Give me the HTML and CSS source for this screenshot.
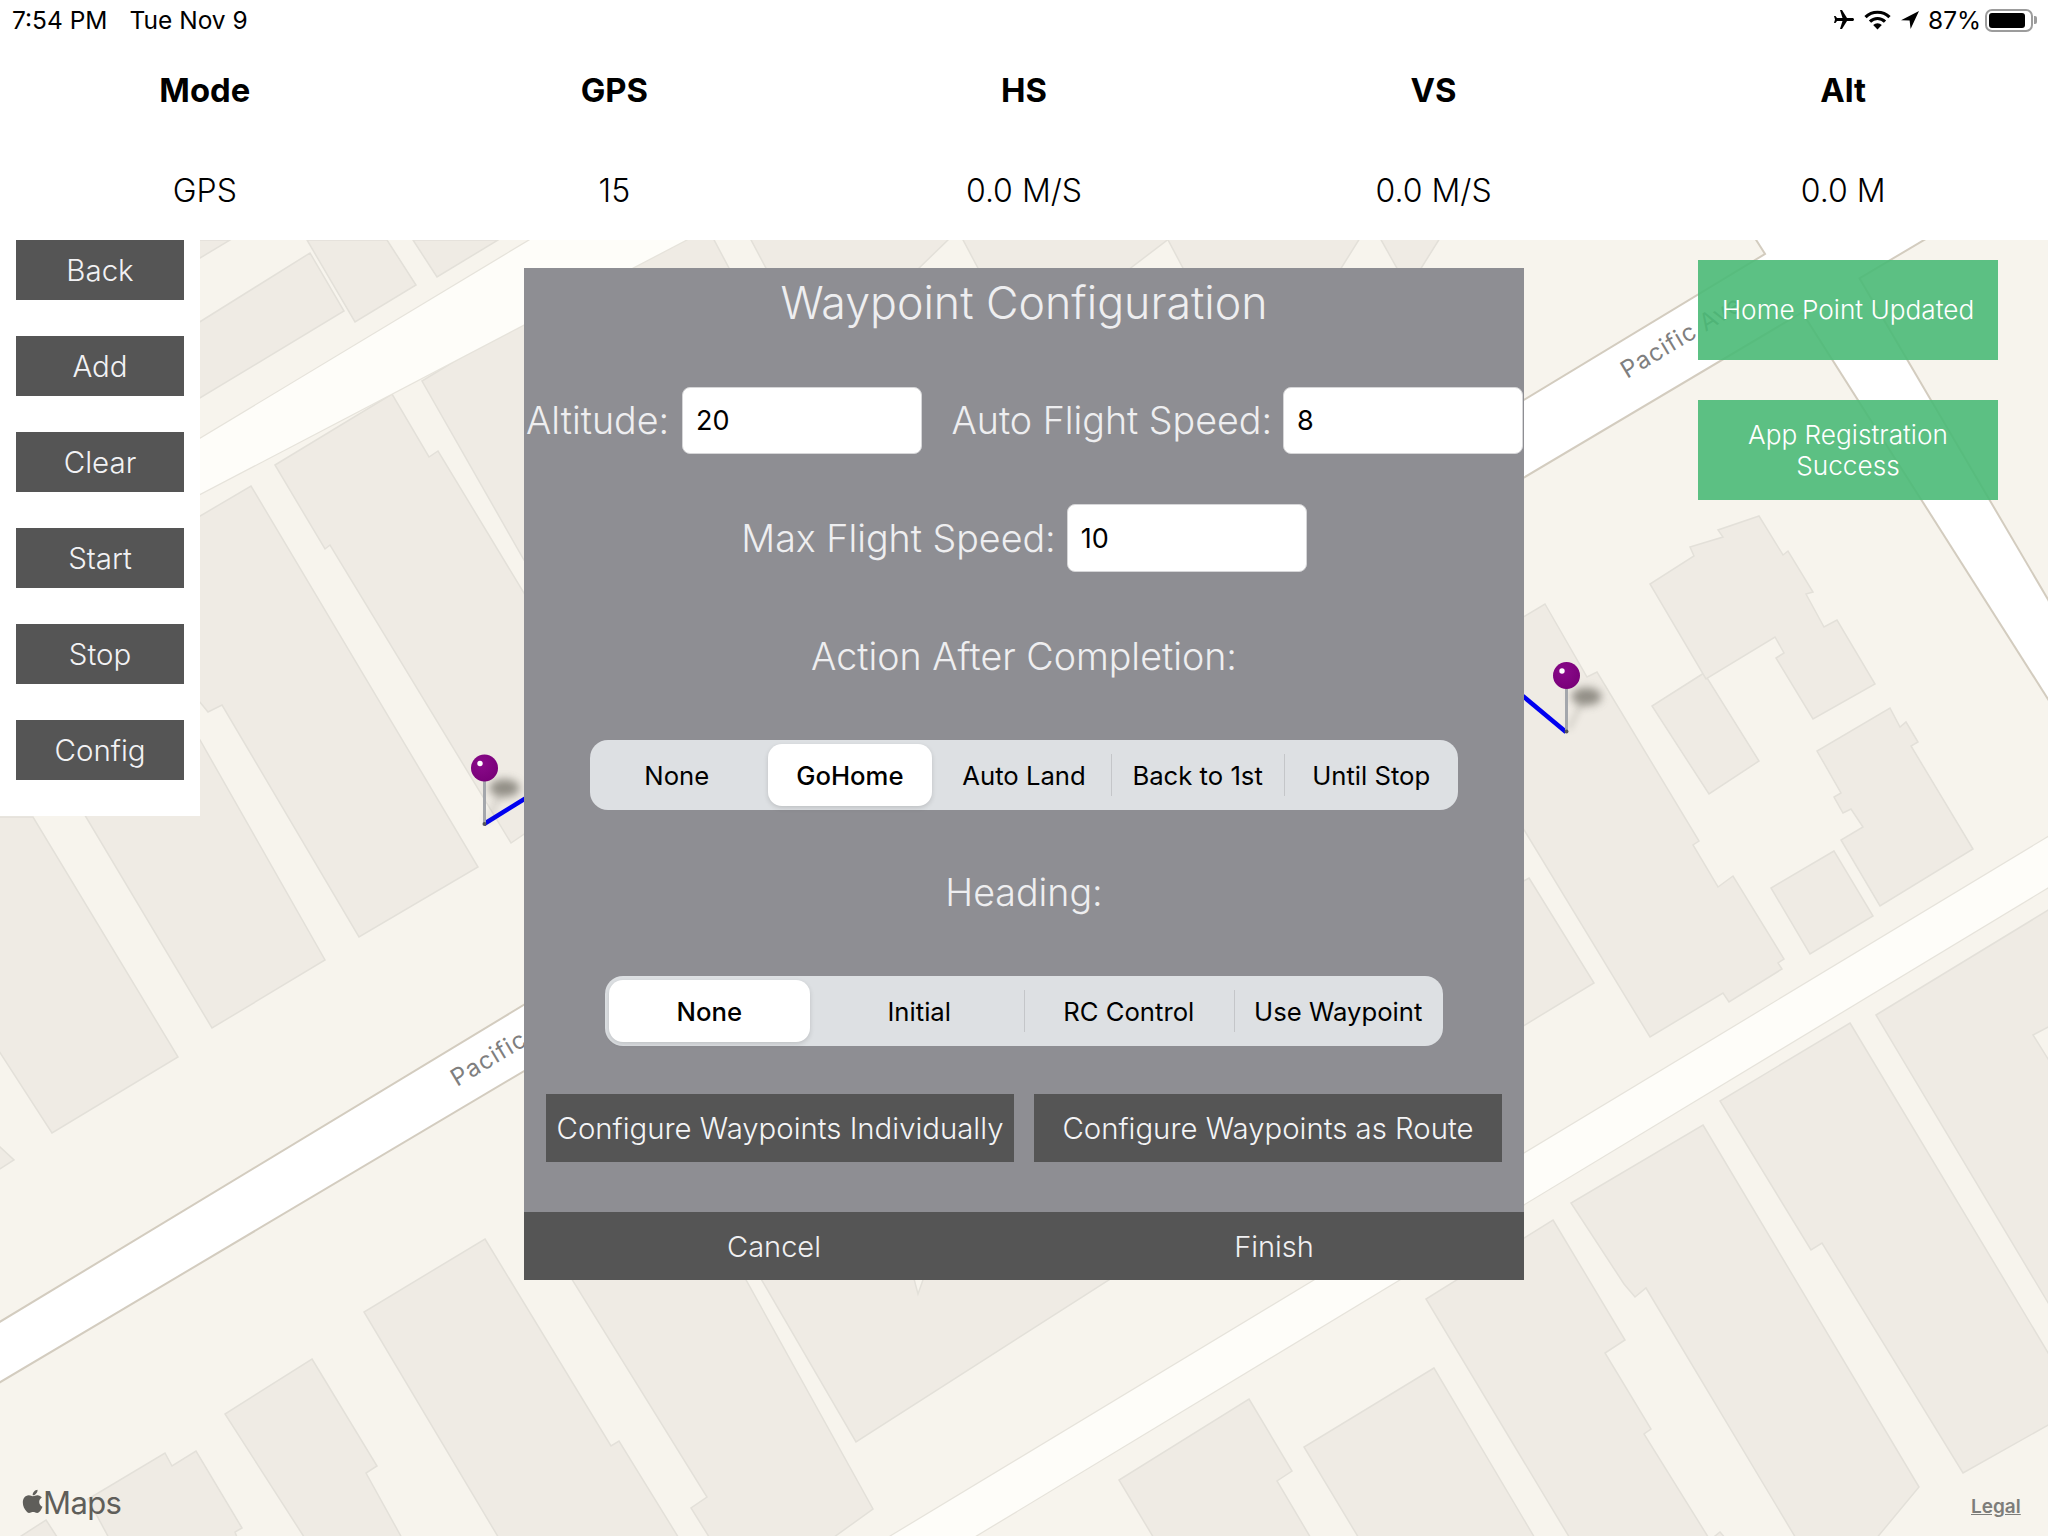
FILE: index.html
```html
<!DOCTYPE html>
<html lang="en">
<head>
<meta charset="utf-8">
<title>Waypoint Configuration</title>
<link rel="stylesheet" href="styles.css">
</head>
<body>
<div class="app">
  <header class="status">
    <div class="status-left"><span>7:54 PM</span><span>Tue Nov 9</span></div>
    <div class="status-right">
      <svg class="ic-plane" viewBox="0 0 24 24"><path transform="rotate(90 12 12)" d="M21 16v-2l-8-5V3.5c0-.83-.67-1.5-1.5-1.5S10 2.67 10 3.5V9l-8 5v2l8-2.5V19l-2 1.5V22l3.5-1 3.5 1v-1.5L13 19v-5.5l8 2.5z"/></svg>
      <svg class="ic-wifi" viewBox="0 0 27 20"><path class="wifi-arc" d="M1.5 7.2a17 17 0 0 1 24 0"/><path class="wifi-arc" d="M6 11.6a10.6 10.6 0 0 1 15 0"/><path d="M13.5 19.5l-4.3-4.4a6 6 0 0 1 8.6 0z"/></svg>
      <svg class="ic-loc" viewBox="0 0 18 18"><path d="M0 9.2 18 0 9.6 18 8.6 9.6z"/></svg>
      <span class="pct">87%</span>
      <div class="battery"><div class="battery-fill"></div></div>
      <div class="battery-nub"></div>
    </div>
  </header>

  <section class="telemetry">
    <div class="t-head">Mode</div><div class="t-head">GPS</div><div class="t-head">HS</div><div class="t-head">VS</div><div class="t-head">Alt</div>
    <div class="t-val">GPS</div><div class="t-val">15</div><div class="t-val">0.0 M/S</div><div class="t-val">0.0 M/S</div><div class="t-val">0.0 M</div>
  </section>

  <main class="map">
    <svg class="map-art" viewBox="0 240 2048 1296" width="2048" height="1296">
      <defs>
        <filter id="blur" x="-80%" y="-80%" width="260%" height="260%"><feGaussianBlur stdDeviation="4"/></filter>
        <filter id="blur-soft" x="-100%" y="-50%" width="300%" height="200%"><feGaussianBlur stdDeviation="3"/></filter>
        <radialGradient id="head" cx="0.4" cy="0.35" r="0.7"><stop offset="0" stop-color="#8a0a8a"/><stop offset="1" stop-color="#780078"/></radialGradient>
      </defs>
      <g class="bld">
        <polygon points="190,264 230,240 190,240"/>
        <polygon points="190,328 310,253 344,311 190,404"/>
        <polygon points="307,240 387,240 416,285 355,322"/>
        <polygon points="413,240 498,240 437,277"/>
        <polygon points="422,381 660,236 712,236 730,270 730,560 524,560"/>
        <polygon points="750,238 950,238 917,270 767,270"/>
        <polygon points="962,238 1170,238 1128,270 979,270"/>
        <polygon points="1167,238 1360,238 1340,270 1184,270"/>
        <polygon points="1380,238 1440,238 1420,270 1398,270"/>
        <polygon points="275,465 392,394 429,457 438,451 530,603 530,830 511,843 330,545 325,549"/>
        <polygon points="190,522 251,486 478,867 359,937 222,705 208,712 190,690"/>
        <polygon points="80,807 200,740 325,960 212,1028"/>
        <polygon points="-5,817 33,817 178,1057 52,1133 -5,1045"/>
        <polygon points="-5,1150 0,1147 14,1160 -5,1172"/>
        <polygon points="485,1239 611,1446 619,1441 680,1540 500,1540 364,1312"/>
        <polygon points="312,1359 377,1466 366,1473 403,1540 306,1540 225,1414"/>
        <polygon points="165,1453 172,1466 196,1451 242,1528 235,1532 238,1540 110,1540 88,1499"/>
        <polygon points="46,1520 59,1540 15,1540"/>
        <polygon points="560,1260 735,1260 873,1509 830,1540 711,1540 691,1508 707,1497"/>
        <polygon points="750,1260 909,1260 918,1294 930,1260 1140,1260 856,1442"/>
        <polygon points="1553,1220 1625,1340 1605,1353 1651,1429 1644,1434 1710,1540 1571,1540 1426,1299"/>
        <polygon points="1703,1125 1919,1487 1875,1540 1797,1540 1646,1288 1635,1297 1624,1284 1571,1203"/>
        <polygon points="1850,1023 2050,1356 2050,1424 1963,1473 1822,1243 1811,1250 1720,1101"/>
        <polygon points="1876,1015 2050,909 2050,1306"/>
        <polygon points="1434,1368 1304,1447 1360,1540 1536,1540"/>
        <polygon points="1249,1399 1292,1471 1277,1481 1312,1540 1155,1540 1119,1480"/>
        <polygon points="1720,1532 1727,1540 1710,1540"/>
        <polygon points="1545,604 1587,677 1597,672 1699,841 1693,845 1718,887 1733,876 1784,959 1778,963 1782,969 1729,1002 1723,993 1650,1037 1515,815 1515,622"/>
        <polygon points="1529,878 1594,983 1515,1031 1515,886"/>
        <polygon points="1704,673 1652,706 1709,794 1759,761"/>
        <polygon points="1759,516 1718,530 1723,537 1690,547 1694,556 1650,584 1706,679 1775,637 1784,653 1776,658 1813,719 1875,684 1837,620 1824,627 1806,594 1813,592 1788,551 1783,555"/>
        <polygon points="1890,708 1900,727 1906,722 1918,742 1911,746 1973,849 1880,906 1841,840 1863,827 1851,809 1843,813 1834,797 1841,793 1817,751"/>
        <polygon points="1834,851 1771,888 1810,954 1873,916"/>
      </g>
      <polygon class="notch" points="2033,1035 2050,1026 2050,1062"/>
      <path class="minor-edge" d="M150,469 L560,222 L720,222 L150,520Z"/>
      <path class="minor-edge" d="M888,1538 L2050,836 L2050,886 L972,1538Z"/>
      <path class="minor-fill" d="M150,469 L560,222 L720,222 L150,520Z"/>
      <path class="minor-fill" d="M888,1538 L2050,836 L2050,886 L972,1538Z"/>
      <path class="major-edge" d="M-10,1329 L2000,113 L2040,170 L-10,1387Z"/>
      <path class="major-edge" d="M1737,208 L1817,208 L2100,690 L2100,779Z"/>
      <path class="major-fill" d="M-10,1329 L2000,113 L2040,170 L-10,1387Z"/>
      <path class="major-fill" d="M1737,208 L1817,208 L2100,690 L2100,779Z"/>
      <text class="road-label" transform="translate(1627,379) rotate(-31)">Pacific Ave</text>
      <text class="road-label" transform="translate(457,1087) rotate(-31)">Pacific Ave</text>
      <line class="route" x1="484" y1="824" x2="620" y2="740"/>
      <line class="route" x1="1566" y1="732" x2="1500" y2="677"/>
      <g transform="translate(484.5 768)">
        <line class="pin-trail" x1="2" y1="54" x2="16" y2="26" filter="url(#blur-soft)"/>
        <ellipse class="pin-shadow" cx="20" cy="20" rx="15" ry="9" filter="url(#blur)"/>
        <rect class="pin-stick" x="-1.5" y="12" width="3" height="44"/>
        <circle class="pin-tip" cx="0" cy="56" r="2"/>
        <circle cx="0" cy="0" r="13.5" fill="url(#head)"/>
        <circle class="pin-glint" cx="-4.5" cy="-4.5" r="2.7"/>
      </g>
      <g transform="translate(1566.5 675.5)">
        <line class="pin-trail" x1="2" y1="54" x2="16" y2="26" filter="url(#blur-soft)"/>
        <ellipse class="pin-shadow" cx="20" cy="21" rx="15" ry="9" filter="url(#blur)"/>
        <rect class="pin-stick" x="-1.5" y="12" width="3" height="44"/>
        <circle class="pin-tip" cx="0" cy="56" r="2"/>
        <circle cx="0" cy="0" r="13.5" fill="url(#head)"/>
        <circle class="pin-glint" cx="-4.5" cy="-4.5" r="2.7"/>
      </g>
    </svg>

    <aside class="sidebar">
      <div class="side-btn">Back</div>
      <div class="side-btn">Add</div>
      <div class="side-btn">Clear</div>
      <div class="side-btn">Start</div>
      <div class="side-btn">Stop</div>
      <div class="side-btn">Config</div>
    </aside>

    <div class="toasts">
      <div class="toast">Home Point Updated</div>
      <div class="toast">App Registration<br>Success</div>
    </div>

    <div class="attrib-left">
      <svg class="apple" viewBox="3 3 17 18.2"><path d="M17.05 20.28c-.98.95-2.05.8-3.08.35-1.09-.46-2.09-.48-3.24 0-1.44.62-2.2.44-3.06-.35C2.79 15.25 3.51 7.59 9.05 7.31c1.35.07 2.29.74 3.08.8 1.18-.24 2.31-.93 3.57-.84 1.51.12 2.65.72 3.4 1.8-3.12 1.87-2.38 5.98.48 7.13-.57 1.5-1.31 2.99-2.54 4.09zM12.03 7.25c-.15-2.23 1.66-4.07 3.74-4.25.29 2.58-2.34 4.5-3.74 4.25z"/></svg>
      <span>Maps</span>
    </div>
    <div class="legal">Legal</div>

    <section class="modal">
      <h1 class="modal-title">Waypoint Configuration</h1>
      <div class="row row-split">
        <div class="field field-wide"><span class="label">Altitude:</span><div class="input">20</div></div>
        <div class="field"><span class="label">Auto Flight Speed:</span><div class="input">8</div></div>
      </div>
      <div class="row row-center">
        <div class="field"><span class="label">Max Flight Speed:</span><div class="input">10</div></div>
      </div>
      <div class="row row-center"><span class="label">Action After Completion:</span></div>
      <div class="seg seg-five">
        <div class="seg-item">None</div>
        <div class="seg-item seg-on">GoHome</div>
        <div class="seg-item">Auto Land</div>
        <div class="seg-item seg-div">Back to 1st</div>
        <div class="seg-item seg-div">Until Stop</div>
      </div>
      <div class="row row-center row-tight"><span class="label">Heading:</span></div>
      <div class="seg seg-four">
        <div class="seg-item seg-on">None</div>
        <div class="seg-item">Initial</div>
        <div class="seg-item seg-div">RC Control</div>
        <div class="seg-item seg-div">Use Waypoint</div>
      </div>
      <div class="btn-row">
        <div class="dark-btn">Configure Waypoints Individually</div>
        <div class="dark-btn">Configure Waypoints as Route</div>
      </div>
      <div class="footer">
        <div class="foot-btn">Cancel</div>
        <div class="foot-btn">Finish</div>
      </div>
    </section>
  </main>
</div>
</body>
</html>
```

FILE: styles.css
```css
* { box-sizing: border-box; }
html, body { margin: 0; padding: 0; }
body { width: 2048px; height: 1536px; overflow: hidden; background: #fff; color: #000; font-family: Inter, "Liberation Sans", sans-serif; }
.app { display: flex; flex-direction: column; width: 2048px; height: 1536px; }

.status { height: 40px; display: flex; justify-content: space-between; align-items: center; padding: 0 11px 0 12px; font-size: 24.5px; flex: none; }
.status-left { display: flex; gap: 22px; }
.status-right { display: flex; align-items: center; }
.status-right svg { fill: #000; display: block; }
.ic-plane { width: 24px; height: 24px; margin-right: 8px; }
.ic-wifi { width: 27px; height: 20px; margin-right: 10px; }
.wifi-arc { fill: none; stroke: #000; stroke-width: 3.2; }
.ic-loc { width: 18px; height: 18px; margin-right: 9px; }
.pct { width: 57px; }
.battery { width: 48px; height: 23px; border: 2px solid #9c9c9c; border-radius: 7px; padding: 2px; }
.battery-fill { width: 36px; height: 100%; background: #000; border-radius: 3px; }
.battery-nub { width: 3px; height: 8px; margin-left: 1px; background: #9c9c9c; border-radius: 0 2px 2px 0; }

.telemetry { height: 200px; flex: none; display: grid; grid-template-columns: repeat(5, 1fr); grid-template-rows: 100px 100px; }
.t-head, .t-val { display: flex; align-items: center; justify-content: center; font-size: 32px; }
.t-head { font-weight: 700; font-size: 32.8px; }
.t-val { font-weight: 300; }

.map { position: relative; flex: 1; background: #f7f4ed; overflow: hidden; }
.map-art { position: absolute; left: 0; top: 0; display: block; }
.bld polygon { fill: #efebe4; stroke: #e3e0d9; stroke-width: 1.5; }
.notch { fill: #f7f4ed; stroke: #e3e0d9; stroke-width: 1.5; }
.minor-edge { fill: none; stroke: #e6e3db; stroke-width: 2.5; }
.minor-fill { fill: #fefdf9; }
.major-edge { fill: none; stroke: #d3ccbf; stroke-width: 4; }
.major-fill { fill: #fff; }
.road-label { font-family: Inter, "Liberation Sans", sans-serif; font-size: 24px; fill: #7f7f7f; letter-spacing: 1px; }
.route { stroke: #0000f0; stroke-width: 4.5; }
.pin-shadow { fill: #6a685f; opacity: .7; }
.pin-trail { stroke: #6a685f; stroke-width: 6; opacity: .16; }
.pin-stick { fill: #a4a7ac; }
.pin-tip { fill: #55565a; }
.pin-glint { fill: #fff; }

.sidebar { position: absolute; left: 0; top: 0; width: 200px; height: 576px; background: #fff; padding: 0 16px; display: flex; flex-direction: column; gap: 36px; }
.side-btn { height: 60px; background: #555; color: #f2f2f4; display: flex; align-items: center; justify-content: center; font-size: 29.5px; font-weight: 300; }

.toasts { position: absolute; left: 1698px; top: 20px; width: 300px; display: flex; flex-direction: column; gap: 40px; }
.toast { height: 100px; padding-bottom: 1px; background: rgba(74, 186, 119, .9); color: #fff; font-size: 26.2px; font-weight: 300; line-height: 31px; display: flex; align-items: center; justify-content: center; text-align: center; }

.attrib-left { position: absolute; left: 21px; top: 1245px; display: flex; align-items: center; gap: 0; color: #5f5e5a; font-size: 31px; line-height: 36px; letter-spacing: -.6px; }
.apple { width: 22px; height: 27px; fill: #5f5e5a; margin-top: -4px; }
.legal { position: absolute; left: 1971px; top: 1256px; font-size: 19px; line-height: 22px; font-weight: 600; color: #7d7d7a; text-decoration: underline; }

.modal { position: absolute; left: 524px; top: 28px; width: 1000px; height: 1012px; background: #8e8e93; color: #eeeef0; display: flex; flex-direction: column; align-items: center; font-weight: 300; }
.modal-title { margin: 0; height: 70px; flex: none; font-size: 44.7px; font-weight: 300; line-height: 70px; text-align: center; }
.row { width: 100%; height: 68px; flex: none; margin-top: 50px; display: flex; align-items: center; }
.row-split { height: 67px; justify-content: space-between; padding: 0 1px 0 2px; margin-top: 49px; }
.row-center { justify-content: center; }
.row-tight { margin-top: 48px; }
.field { display: flex; align-items: center; gap: 11px; height: 100%; }
.field-wide { gap: 13px; }
.label { font-size: 37.6px; font-weight: 300; white-space: nowrap; }
.input { width: 240px; height: 100%; background: #fff; border: 1px solid #d6d6d8; border-radius: 8px; color: #000; font-size: 27px; font-weight: 400; display: flex; align-items: center; padding-left: 13px; }

.seg { height: 70px; flex: none; margin-top: 50px; padding: 4px 0; background: #dde0e3; border-radius: 18px; color: #000; display: grid; }
.seg-five { width: 868px; grid-template-columns: repeat(5, 1fr); }
.seg-four { width: 838px; grid-template-columns: repeat(4, 1fr); }
.seg-item { position: relative; display: flex; align-items: center; justify-content: center; font-size: 25.7px; font-weight: 400; }
.seg-div::before { content: ""; position: absolute; left: 0; top: 10px; bottom: 10px; width: 1px; background: #c4c6c9; }
.seg-on { background: #fff; border-radius: 14px; font-weight: 500; box-shadow: 0 2px 5px rgba(0,0,0,.14); margin: 0 5px 0 4px; }

.btn-row { width: 100%; flex: none; margin-top: 48px; padding: 0 22px; display: flex; justify-content: space-between; }
.dark-btn { width: 468px; height: 68px; background: #555; color: #f4f4f6; font-size: 29.35px; font-weight: 300; display: flex; align-items: center; justify-content: center; white-space: nowrap; }

.footer { width: 100%; height: 68px; flex: none; margin-top: 50px; background: #555; display: grid; grid-template-columns: 1fr 1fr; }
.foot-btn { display: flex; align-items: center; justify-content: center; color: #f0f0f2; font-size: 29px; font-weight: 300; }
```
